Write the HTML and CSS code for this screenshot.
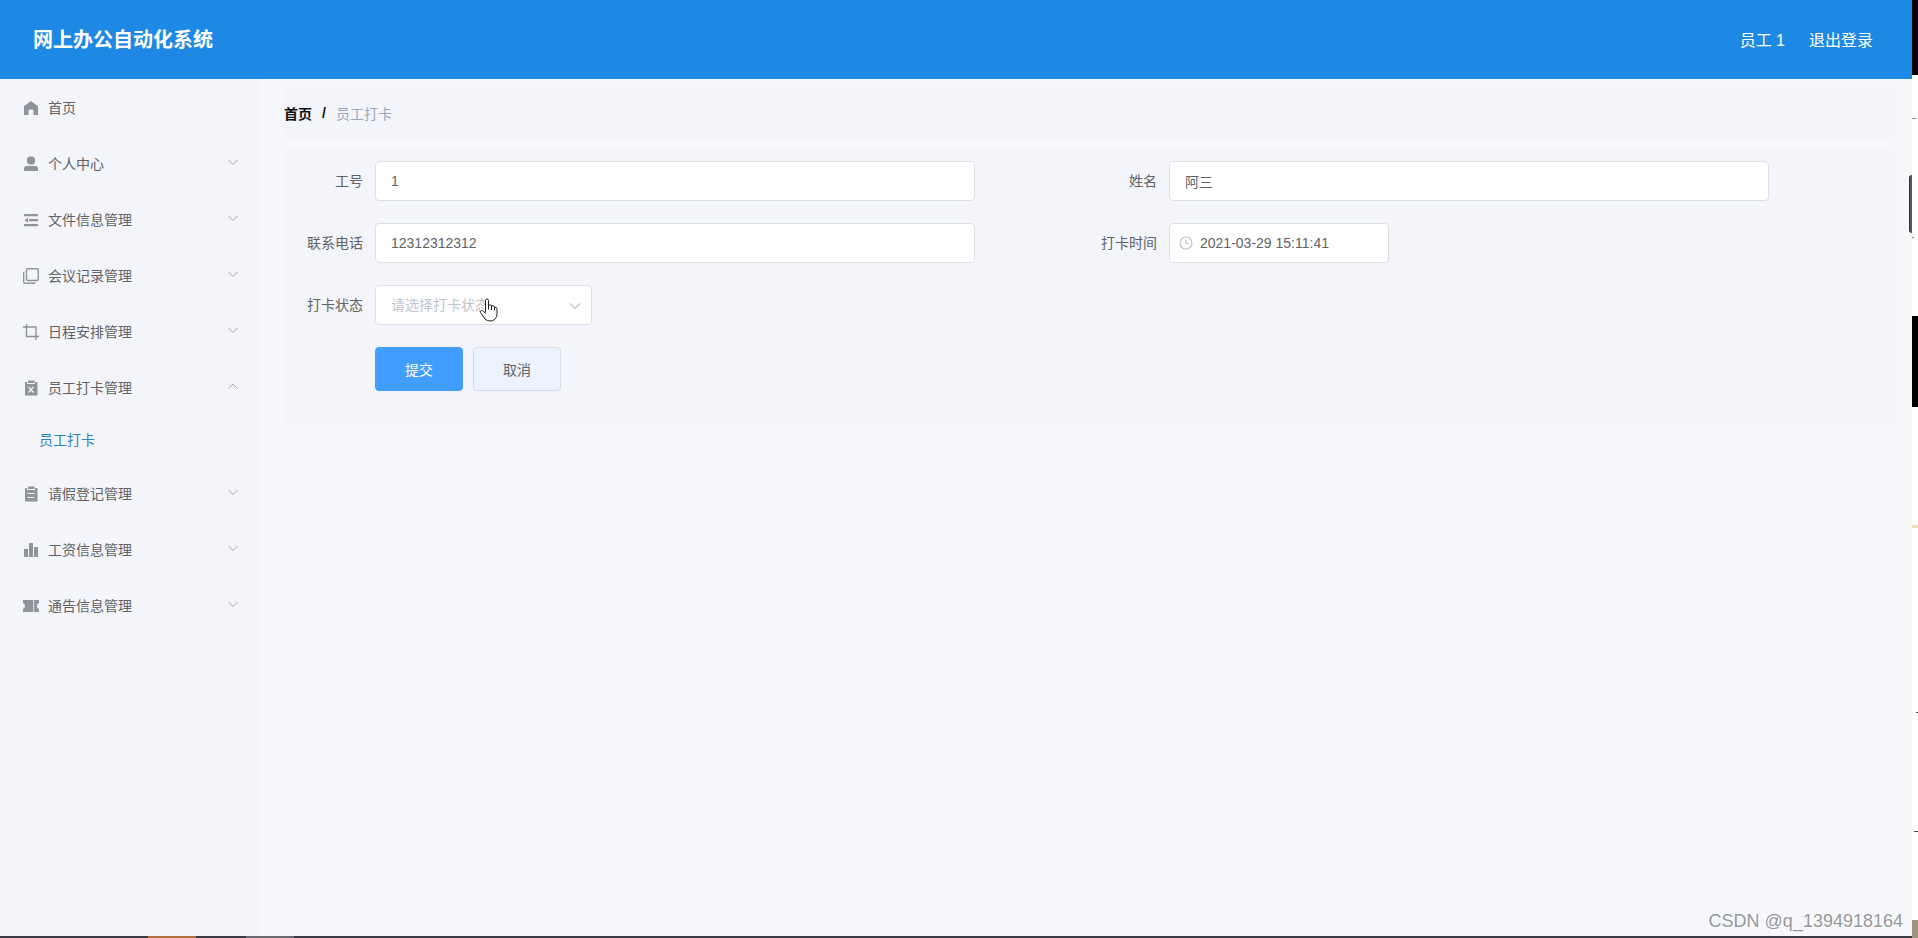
FILE: index.html
```html
<!DOCTYPE html>
<html lang="zh-CN">
<head>
<meta charset="utf-8">
<meta name="viewport" content="width=device-width, initial-scale=1">
<title>网上办公自动化系统</title>
<link rel="stylesheet" href="styles.css">
</head>
<body>
<div class="screen">
  <div class="app">
    <header class="header">
      <h1 class="header-title">网上办公自动化系统</h1>
      <div class="header-user">
        <span>员工 1</span>
        <a class="logout" href="#">退出登录</a>
      </div>
    </header>
    <div class="body">
      <nav class="sidebar" aria-label="主菜单">
        <a class="menu-row" href="#">
          <svg class="menu-icon" viewBox="0 0 16 16"><path d="M8 1 15 6.200V15H10.500V10.500Q10.500 9.500 9.500 9.500H6.500Q5.500 9.500 5.500 10.500V15H1V6.200Z"/></svg>
          <span class="menu-text">首页</span>
        </a>
        <button class="menu-row" type="button">
          <svg class="menu-icon" viewBox="0 0 16 16"><rect x="4" y="0.500" width="8" height="8" rx="3.600"/><path d="M1 15V12.500Q1 10 3.500 10H12.500Q15 10 15 12.500V15Z"/></svg>
          <span class="menu-text">个人中心</span>
          <svg class="chevron" viewBox="0 0 12 12"><path d="M1.500 4 6 8.500 10.500 4"/></svg>
        </button>
        <button class="menu-row" type="button">
          <svg class="menu-icon" viewBox="0 0 16 16"><path d="M1 2H15V4.300H1ZM6 7H15V9.300H6ZM1 12H15V14.300H1ZM1.500 8.200 5 5.700V10.700Z"/></svg>
          <span class="menu-text">文件信息管理</span>
          <svg class="chevron" viewBox="0 0 12 12"><path d="M1.500 4 6 8.500 10.500 4"/></svg>
        </button>
        <button class="menu-row" type="button">
          <svg class="menu-icon line" viewBox="0 0 16 16"><rect x="3.500" y="0.700" width="11.800" height="11.800" rx="1.500"/><path d="M1.500 4Q0.700 4 0.700 5V14Q0.700 15.300 2 15.300H11Q12 15.300 12 14.500"/></svg>
          <span class="menu-text">会议记录管理</span>
          <svg class="chevron" viewBox="0 0 12 12"><path d="M1.500 4 6 8.500 10.500 4"/></svg>
        </button>
        <button class="menu-row" type="button">
          <svg class="menu-icon line" viewBox="0 0 16 16"><path d="M3.500 0V12.500H16M0 3H13V16"/></svg>
          <span class="menu-text">日程安排管理</span>
          <svg class="chevron" viewBox="0 0 12 12"><path d="M1.500 4 6 8.500 10.500 4"/></svg>
        </button>
        <button class="menu-row" type="button" aria-expanded="true">
          <svg class="menu-icon" viewBox="0 0 16 16"><path d="M2 2H4V4H12V2H14.500V15.500H2ZM5 0.500H11.500V3H5Z"/><path class="cut" d="M5.500 7 10.500 12.500M10.500 7 5.500 12.500"/></svg>
          <span class="menu-text">员工打卡管理</span>
          <svg class="chevron" viewBox="0 0 12 12"><path d="M1.500 8.500 6 4 10.500 8.500"/></svg>
        </button>
        <a class="submenu-row" href="#" aria-current="page">员工打卡</a>
        <button class="menu-row" type="button">
          <svg class="menu-icon" viewBox="0 0 16 16"><path d="M2 2H4V4H12V2H14.500V15.500H2ZM5 0.500H11.500V3H5Z"/><path class="cut" d="M4.500 7.500H11.500M4.500 11.500H11.500"/></svg>
          <span class="menu-text">请假登记管理</span>
          <svg class="chevron" viewBox="0 0 12 12"><path d="M1.500 4 6 8.500 10.500 4"/></svg>
        </button>
        <button class="menu-row" type="button">
          <svg class="menu-icon" viewBox="0 0 16 16"><path d="M1 7H5V15H1ZM6 1H10V15H6ZM11 5H15V15H11Z"/></svg>
          <span class="menu-text">工资信息管理</span>
          <svg class="chevron" viewBox="0 0 12 12"><path d="M1.500 4 6 8.500 10.500 4"/></svg>
        </button>
        <button class="menu-row" type="button">
          <svg class="menu-icon" viewBox="0 0 16 16"><path d="M0 2H10.500V14H0V11Q2 10.500 2 8T0 5ZM11 2H16V5Q14 5.500 14 8T16 11V14H11Z"/><path class="cut" d="M10.700 3V14" stroke-dasharray="1 1.500"/></svg>
          <span class="menu-text">通告信息管理</span>
          <svg class="chevron" viewBox="0 0 12 12"><path d="M1.500 4 6 8.500 10.500 4"/></svg>
        </button>
      </nav>
      <main class="main">
        <nav class="breadcrumb" aria-label="面包屑">
          <a class="crumb-home" href="#">首页</a>
          <span class="crumb-sep">/</span>
          <span class="crumb-current">员工打卡</span>
        </nav>
        <form class="panel">
          <div class="fields">
            <div class="field">
              <label class="label" for="job-no">工号</label>
              <input class="input" id="job-no" type="text" value="1">
            </div>
            <div class="field">
              <label class="label" for="name">姓名</label>
              <input class="input" id="name" type="text" value="阿三">
            </div>
            <div class="field">
              <label class="label" for="phone">联系电话</label>
              <input class="input" id="phone" type="text" value="12312312312">
            </div>
            <div class="field">
              <label class="label" for="time">打卡时间</label>
              <div class="date">
                <input class="input input-date" id="time" type="text" value="2021-03-29 15:11:41">
                <svg class="clock" viewBox="0 0 14 14"><circle cx="7" cy="7" r="6"/><path d="M7 3.500V7.500H10"/></svg>
              </div>
            </div>
            <div class="field">
              <label class="label" for="status">打卡状态</label>
              <div class="select">
                <select class="input input-select" id="status">
                  <option value="">请选择打卡状态</option>
                </select>
                <svg class="select-arrow" viewBox="0 0 12 12"><path d="M1 3.500 6 8.500 11 3.500"/></svg>
                <svg class="pointer" viewBox="0 0 19 24"><path d="M6.500 14.500V2.500Q6.500 1 8 1T9.500 2.500V9.500V7.500Q11 6 12.500 7.500V10V8Q14 7 15.500 8.500V10.500V9.500Q17.500 8.500 18 10.500V16Q18 19 16 21Q14 23.200 11 23Q8 23 6 21L1.500 14.500Q0.800 12.800 2.300 12.500Q3.500 12.300 4.800 13.700L6.500 15.500M9.500 9V11.500M12.500 9V12M15.500 10V12.500"/></svg>
              </div>
            </div>
          </div>
          <div class="actions">
            <button class="btn btn-primary" type="button">提交</button>
            <button class="btn" type="button">取消</button>
          </div>
        </form>
      </main>
    </div>
    <div class="taskbar"><span class="task task-orange"></span><span class="task task-gray"></span></div>
  </div>
  <svg class="edge" viewBox="0 0 6 938" preserveAspectRatio="none" aria-hidden="true">
    <path fill="#000" d="M0 0H6V75H0ZM0 316H6V407H0Z"/>
    <path fill="#888" d="M0 118H4V119H0ZM0 237H2V238H0Z"/>
    <path fill="#f3dfae" d="M0 525H6V528H0Z"/>
    <path fill="#444" d="M4 712H6V713H4ZM2 831H6V832H2Z"/>
    <path fill="#a0957f" d="M0 920H6V938H0Z"/>
  </svg>
  <div class="side-handle"></div>
  <div class="watermark">CSDN @q_1394918164</div>
</div>
</body>
</html>
```

FILE: styles.css
```css
* {
  box-sizing: border-box;
}

body {
  margin: 0;
  color: #606266;
  font-family: "Liberation Sans", "Noto Sans CJK SC", sans-serif;
  font-size: 14px;
}

button,
input,
select {
  font: inherit;
}

a {
  text-decoration: none;
}

.screen {
  position: relative;
  display: flex;
  min-height: 100vh;
  background: #fff;
}

.app {
  flex: 1;
  display: flex;
  flex-direction: column;
  background: #f6f7fb;
}

.header {
  display: flex;
  align-items: center;
  justify-content: space-between;
  height: 79px;
  padding: 0 39px 2px 33px;
  background: #1e88e5;
  color: #fff;
}

.header-title {
  margin: 0;
  font-size: 20px;
  font-weight: 700;
}

.header-user {
  display: flex;
  gap: 24px;
  font-size: 16px;
}

.logout {
  color: #fff;
}

.body {
  flex: 1;
  display: flex;
}

.sidebar {
  display: flex;
  flex-direction: column;
  width: 260px;
  padding-top: 1px;
  background: #f3f5fa;
}

.menu-row {
  display: flex;
  align-items: center;
  height: 56px;
  padding: 0 21px 0 23px;
  border: 0;
  background: none;
  color: #606266;
  text-align: left;
}

.menu-icon {
  width: 16px;
  height: 16px;
  margin-right: 9px;
  fill: #909399;
}

.menu-icon.line {
  fill: none;
  stroke: #909399;
  stroke-width: 1.4;
}

.cut {
  fill: none;
  stroke: #f3f5fa;
  stroke-width: 1.2;
}

.menu-text {
  flex: 1;
  padding-bottom: 2px;
}

.chevron {
  width: 12px;
  height: 12px;
  margin-bottom: 5px;
  fill: none;
  stroke: #a4a7ad;
}

.submenu-row {
  height: 50px;
  padding-left: 39px;
  color: #2f83b8;
  line-height: 48px;
}

.main {
  flex: 1;
  display: flex;
  flex-direction: column;
  gap: 10px;
  padding: 10px 18px 10px 24px;
}

.breadcrumb {
  display: flex;
  align-items: center;
  height: 50px;
  padding-bottom: 2px;
  background: #f3f5fa;
}

.crumb-home {
  color: #111;
  font-weight: 700;
}

.crumb-sep {
  margin: 0 10px;
  color: #111;
  font-weight: 700;
}

.crumb-current {
  color: #97a8be;
}

.panel {
  padding: 12px 11px 34px;
  background: #f3f5fa;
}

.fields {
  display: grid;
  grid-template-columns: 1fr 1fr;
  row-gap: 22px;
}

.field {
  display: flex;
  align-items: center;
}

.label {
  width: 80px;
  padding: 0 12px 2px 0;
  text-align: right;
}

.input {
  width: 100%;
  max-width: 600px;
  height: 40px;
  padding: 0 15px;
  border: 1px solid #dcdfe6;
  border-radius: 4px;
  background: #fff;
  color: #606266;
}

.date {
  position: relative;
  width: 220px;
}

.input-date {
  padding-left: 30px;
}

.clock {
  position: absolute;
  top: 13px;
  left: 10px;
  width: 14px;
  height: 14px;
  fill: none;
  stroke: #c0c4cc;
  stroke-width: 1.2;
}

.select {
  position: relative;
  width: 217px;
}

.input-select {
  appearance: none;
  color: #c0c4cc;
}

.select-arrow {
  position: absolute;
  top: 15px;
  right: 11px;
  width: 12px;
  height: 12px;
  fill: none;
  stroke: #c0c4cc;
  stroke-width: 1.2;
  pointer-events: none;
}

.pointer {
  position: absolute;
  top: 13px;
  left: 104px;
  width: 19px;
  height: 24px;
  fill: #fff;
  stroke: #222;
  pointer-events: none;
}

.actions {
  display: flex;
  gap: 10px;
  padding: 22px 0 0 80px;
}

.btn {
  width: 88px;
  height: 44px;
  padding-bottom: 2px;
  border: 1px solid #d5dbe8;
  border-radius: 4px;
  background: #ecf3fe;
  color: #606266;
}

.btn-primary {
  border-color: #409eff;
  background: #409eff;
  color: #fff;
}

.taskbar {
  display: flex;
  gap: 50px;
  height: 2px;
  padding-left: 148px;
  background: #3a3a44;
}

.task {
  width: 48px;
}

.task-orange {
  background: #b07040;
}

.task-gray {
  background: #6b6a70;
}

.edge {
  width: 6px;
  height: 100vh;
}

.side-handle {
  position: absolute;
  top: 175px;
  right: 6px;
  width: 3px;
  height: 58px;
  border-left: 1px solid #2c3440;
  border-radius: 3px 0 0 3px;
  background: #525a68;
}

.watermark {
  position: absolute;
  right: 15px;
  bottom: 6px;
  color: #96989c;
  font-size: 18px;
  text-shadow: 1px 1px 0 #fff;
}
```
